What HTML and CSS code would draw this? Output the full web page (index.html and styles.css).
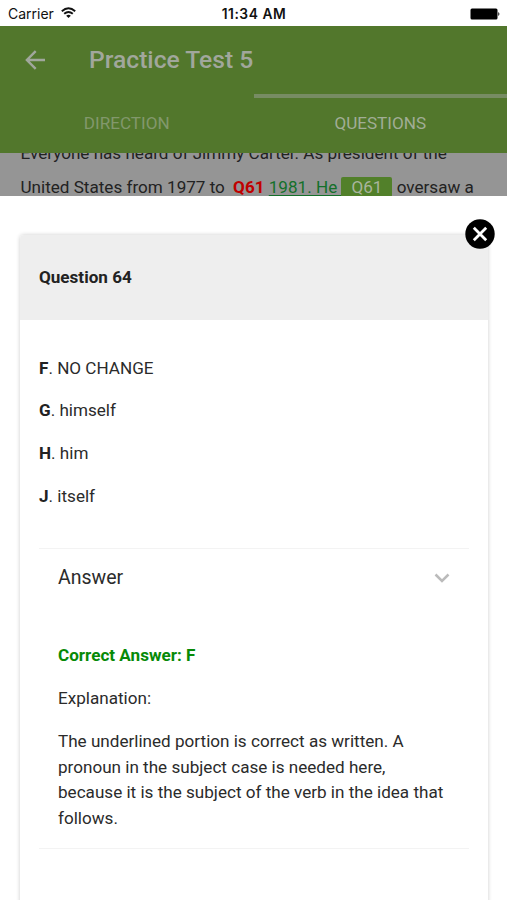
FILE: index.html
```html
<!DOCTYPE html>
<html lang="en">
<head>
<meta charset="utf-8">
<title>Practice Test 5</title>
<link rel="stylesheet" href="styles.css">
</head>
<body>
<div class="status">
  <div class="carrier"><span>Carrier</span>
    <svg width="15" height="11" viewBox="0 0 15 11" fill="none" stroke="#111" stroke-width="1.9"><path d="M.8 4.200Q7.500-1.500 14.200 4.200M3.200 6.800Q7.500 3.200 11.800 6.800"/><path d="M5.200 8.700Q7.500 6.800 9.800 8.700L7.500 11Z" fill="#111" stroke="none"/></svg>
  </div>
  <div class="time">11:34 AM</div>
  <div class="power"><svg width="30" height="12" viewBox="0 0 30 12"><rect x=".5" y=".5" width="27" height="11" rx="1.500"/><path d="M28.300 4Q30.500 6 28.300 8Z"/></svg></div>
</div>
<header class="header">
  <div class="bar">
    <svg class="back" width="20" height="20" viewBox="0 0 20 20"><path d="M20 10H2M10.700 1.200L1.900 10l8.800 8.800"/></svg>
    <h1>Practice Test 5</h1>
  </div>
  <nav class="tabs"><div class="tab">DIRECTION</div><div class="tab active">QUESTIONS</div></nav>
</header>
<section class="passage">
  <p>Everyone has heard of Jimmy Carter. As president of the</p>
  <p>United States from 1977 to <b class="mark">Q61</b> <u>1981. He </u><span class="chip">Q61</span> oversaw a</p>
</section>
<main class="sheet">
  <article class="card">
    <button class="close" aria-label="Close"><svg width="30" height="30" viewBox="0 0 30 30"><circle cx="15" cy="15" r="14.700"/><path d="M8.800 8.800l12.400 12.400M21.200 8.800L8.800 21.200"/></svg></button>
    <h2>Question 64</h2>
    <div class="content">
      <p><b>F</b>. NO CHANGE</p>
      <p><b>G</b>. himself</p>
      <p><b>H</b>. him</p>
      <p><b>J</b>. itself</p>
      <section class="answer">
        <div class="toggle"><span>Answer</span><svg width="16" height="10" viewBox="0 0 16 10"><path d="M1.500 1.500L8 8l6.500-6.500"/></svg></div>
        <p class="correct">Correct Answer: F</p>
        <p>Explanation:</p>
        <p>The underlined portion is correct as written. A<br>pronoun in the subject case is needed here,<br>because it is the subject of the verb in the idea that<br>follows.</p>
      </section>
    </div>
  </article>
</main>
</body>
</html>
```

FILE: styles.css
```css
* { box-sizing: border-box; }
body { margin: 0; height: 900px; overflow: hidden; background: #fff; color: #2b2b2b; font: 17.1px/25.7px Roboto, sans-serif; display: flex; flex-direction: column; }
.status { height: 25.500px; flex: none; display: grid; grid-template-columns: 1fr auto 1fr; align-items: center; padding: 2px 7px 0 8px; color: #111; font: 14px/20px Inter, sans-serif; }
.carrier { display: flex; align-items: center; gap: 7px; }
.carrier svg { position: relative; top: -1px; }
.time { font-weight: 600; font-size: 13.800px; letter-spacing: .55px; }
.power { display: flex; justify-content: flex-end; }
.header { height: 127px; flex: none; background: #52772c; }
.bar { height: 68px; display: flex; align-items: center; padding-left: 25px; gap: 44px; }
.back { fill: none; stroke: #a1a79c; stroke-width: 2.4; }
h1 { margin: 1px 0 0; color: #a1a79c; font-size: 24.650px; font-weight: 500; }
.tabs { height: 59px; display: grid; grid-template-columns: 1fr 1fr; text-align: center; color: #82986c; }
.tab { padding-top: 12.500px; border-top: 4px solid transparent; line-height: 26px; }
.active { border-color: #778c63; color: #a1ad96; }
.passage { height: 43.500px; flex: none; overflow: hidden; padding-left: 20.500px; background: #959595; color: #222; }
.passage p { margin: -16.500px 0 0; line-height: 34px; white-space: nowrap; }
.passage p + p { margin: 0; }
.mark { color: #c00000; margin: 0 0 0 4px; }
u { color: #14702a; text-underline-offset: 2px; }
.chip { background: #52802a; color: #a9b59e; padding: 0 10px; line-height: 20px; display: inline-block; border-radius: 2px; }
.sheet { flex: 1; padding: 38.500px 19px 0 20px; }
.card { position: relative; height: 700px; border-radius: 4px 4px 0 0; box-shadow: 0 0 4px #ccc; }
h2 { margin: 0; height: 85px; padding: 0 19px; border-radius: 4px 4px 0 0; background: #eee; color: #222; font-size: 17.100px; line-height: 85px; font-weight: 700; }
.close { position: absolute; right: -7px; top: -16px; width: 30px; height: 30px; border: 0; padding: 0; background: none; }
.close path { stroke: #fff; stroke-width: 2.8; }
.content { padding: 36px 19px 0; }
.content p { margin: 0 0 17.100px; }
.content > p b { color: #222; }
.answer { margin-top: 38px; padding: 0 19px 16px; border-top: 1px solid #f3f3f3; border-bottom: 1px solid #f3f3f3; }
.toggle { height: 58px; display: flex; align-items: center; justify-content: space-between; font-size: 19.500px; margin-bottom: 36.800px; }
.toggle svg { fill: none; stroke: #bbb; stroke-width: 2.5; }
.correct { color: #078a07; font-weight: 700; }
.answer p:last-child { margin: 0; }
```
